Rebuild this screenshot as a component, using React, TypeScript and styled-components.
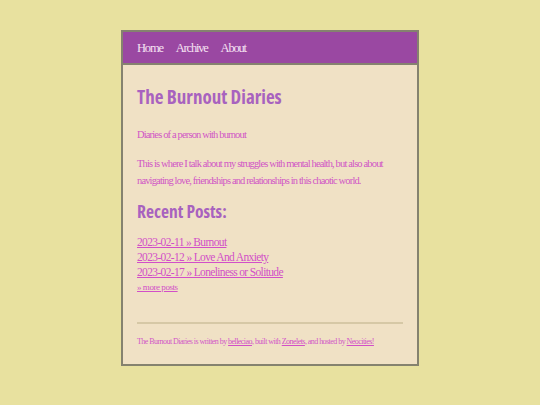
import React from "react";
import styled, { createGlobalStyle } from "styled-components";

const GlobalStyle = createGlobalStyle`
  html, body { margin: 0; padding: 0; }
  body {
    background: #e8e19f;
    font-family: "Liberation Serif", "DejaVu Serif", serif;
    color: #d257c8;
  }
`;

const Card = styled.div`
  width: 294px;
  margin: 30px auto 0;
  border: 2px solid #85826f;
  background: #f0e1c5;
`;

const Nav = styled.nav`
  display: flex;
  align-items: center;
  gap: 13px;
  height: 31px;
  padding: 0 14px;
  background: #9a48a2;
  border-bottom: 2px solid #85826f;
`;

const NavLink = styled.a`
  font-size: 12.5px;
  letter-spacing: -1.2px;
  color: #f6e2f2;
  text-decoration: none;
  padding-top: 1px;
`;

const Main = styled.main`
  padding: 20px 14px 17px;
`;

const Title = styled.h1`
  margin: 0;
  font-family: "Open Sans", "Liberation Sans", sans-serif;
  font-stretch: condensed;
  font-weight: 700;
  font-size: 19px;
  line-height: 24px;
  color: #a862bf;
`;

const SubHeading = styled.h2`
  margin: 11px 0 0;
  font-family: "Open Sans", "Liberation Sans", sans-serif;
  font-stretch: condensed;
  font-weight: 700;
  font-size: 17.5px;
  line-height: 22px;
  color: #a862bf;
`;

const Text = styled.p<{ $gap: number }>`
  margin: ${(p) => p.$gap}px 0 0;
  font-size: 10.5px;
  line-height: 17px;
  letter-spacing: -0.85px;
  color: #d055c6;
`;

const PostList = styled.div`
  margin-top: 13px;
  display: flex;
  flex-direction: column;
  line-height: 15px;
`;

const PostLink = styled.a<{ $small?: boolean }>`
  align-self: flex-start;
  font-size: ${(p) => (p.$small ? "9px" : "11.5px")};
  letter-spacing: ${(p) => (p.$small ? "-0.45px" : "-0.65px")};
  color: #d24fc8;
  text-decoration: underline;
`;

const Rule = styled.hr`
  margin: 27px 0 0;
  border: none;
  height: 2px;
  background: #d6c8a6;
`;

const Footer = styled.footer`
  margin-top: 12px;
  font-size: 8px;
  line-height: 11px;
  letter-spacing: -0.55px;
  color: #d257c8;
`;

const FootLink = styled.a`
  color: #d24fc8;
  text-decoration: underline;
`;

const posts = [
  "2023-02-11 » Burnout",
  "2023-02-12 » Love And Anxiety",
  "2023-02-17 » Loneliness or Solitude",
];

export default function App() {
  return (
    <>
      <GlobalStyle />
      <Card>
        <Nav>
          <NavLink href="#">Home</NavLink>
          <NavLink href="#">Archive</NavLink>
          <NavLink href="#">About</NavLink>
        </Nav>
        <Main>
          <Title>The Burnout Diaries</Title>
          <Text $gap={17}>Diaries of a person with burnout</Text>
          <Text $gap={12}>
            This is where I talk about my struggles with mental health, but also
            about navigating love, friendships and relationships in this chaotic
            world.
          </Text>
          <SubHeading>Recent Posts:</SubHeading>
          <PostList>
            {posts.map((p) => (
              <PostLink key={p} href="#">
                {p}
              </PostLink>
            ))}
            <PostLink $small href="#">
              » more posts
            </PostLink>
          </PostList>
          <Rule />
          <Footer>
            The Burnout Diaries is written by <FootLink href="#">belleciao</FootLink>,
            built with <FootLink href="#">Zonelets</FootLink>, and hosted by{" "}
            <FootLink href="#">Neocities!</FootLink>
          </Footer>
        </Main>
      </Card>
    </>
  );
}
